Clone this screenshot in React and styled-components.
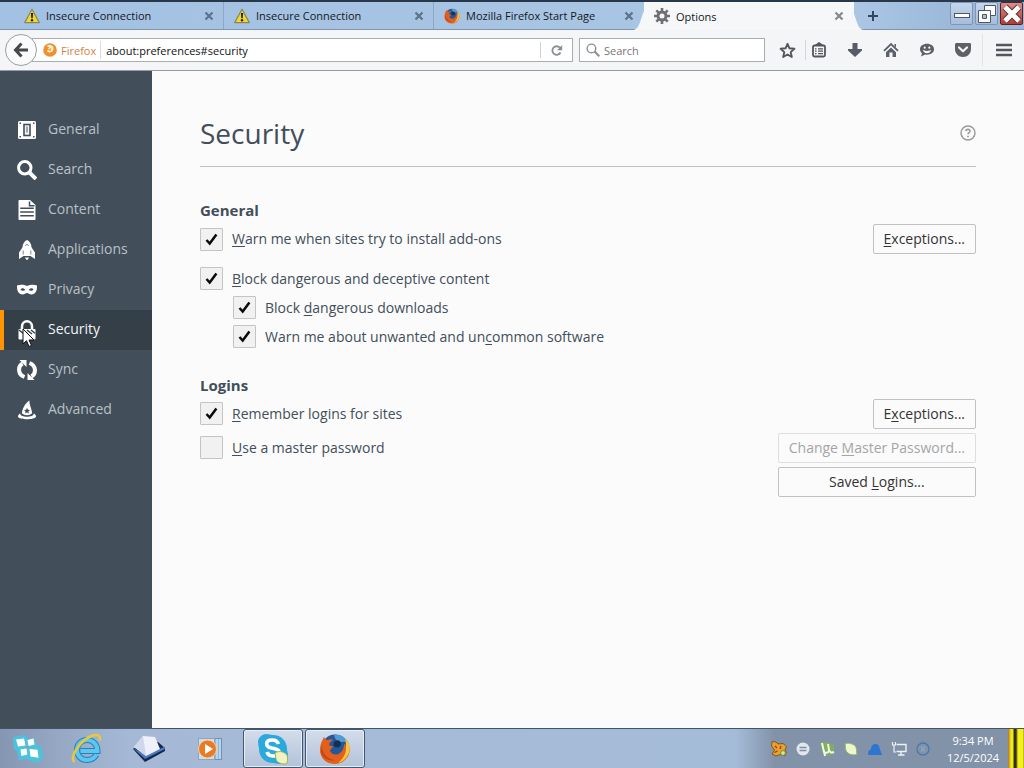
import React from 'react'
import styled, { createGlobalStyle } from 'styled-components'

const WarningIcon = () => (
    <svg width="16" height="16" viewBox="0 0 16 16" aria-hidden="true">
        <path d="M8 1.200 15.300 14.600H.7z" fill="#efd92e" stroke="#8b8558" strokeWidth="1.200" strokeLinejoin="round" />
        <path d="M6.900 5h2.200l-.4 5.200H7.300z" fill="#222" />
        <circle cx="8" cy="12.200" r="1.200" fill="#222" />
    </svg>
)

const FirefoxIcon = ({ size }) => (
    <svg width={size} height={size} viewBox="0 0 32 32" aria-hidden="true">
        <circle cx="16" cy="15" r="13.500" fill="#23589c" />
        <path d="M15 2c6-1.500 12 2 14 8-3-2-5-1-8-1s-5-3-6-7z" fill="#4f9bd6" />
        <path d="M16 8c3-2 6 0 6 3s-3 4-6 3c-2-1-2-4 0-6z" fill="#16304f" />
        <path d="M3 8c1-1 1-3 2-4 1 2 2 3 4 3 2-1 4-1 5 0-2 1-4 3-4 5 1 1 3 1 4 1 0 2-3 3-3 5 1 3 6 5 10 2 3-2 4-6 4-9 1 0 2 1 2 3 1-3 0-6-1-8 4 3 6 9 4 15-2 6-8 10-14 10C7 31 1 25 1 17c0-4 1-7 2-9z" fill="#e2601b" />
        <path d="M26 6c5 4 6 11 3 16-2 4-6 7-10 8 5-4 8-9 8-15 0-3 0-6-1-9z" fill="#f8c63b" />
        <path d="M3 12c0 8 4 14 13 15-6 2-12-2-14-8z" fill="#c83f1c" />
    </svg>
)

const GearIcon = () => (
    <svg width="16" height="16" viewBox="0 0 16 16" fill="none" stroke="#6d6f73" aria-hidden="true">
        <circle cx="8" cy="8" r="4" strokeWidth="3" />
        <path d="M8 0v3M8 13v3M0 8h3M13 8h3M2.300 2.300l2.100 2.100M11.600 11.600l2.100 2.100M2.300 13.700l2.100-2.100M11.600 4.400l2.100-2.100" strokeWidth="2.600" />
    </svg>
)

const CloseIcon = () => (
    <svg width="10" height="10" viewBox="0 0 10 10" aria-hidden="true">
        <path d="M1.500 1.500l7 7M8.500 1.500l-7 7" stroke="currentColor" strokeWidth="2.200" />
    </svg>
)

const PlusIcon = () => (
    <svg width="12" height="12" viewBox="0 0 12 12" aria-hidden="true">
        <path d="M6 1v10M1 6h10" stroke="#33475c" strokeWidth="2" />
    </svg>
)

const MinimizeIcon = () => (
    <svg width="18" height="18" viewBox="0 0 18 18" aria-hidden="true">
        <rect x="1.500" y="8.500" width="15" height="4" fill="#fff" stroke="#4e5768" />
    </svg>
)

const RestoreIcon = () => (
    <svg width="20" height="20" viewBox="0 0 20 20" fill="#fff" stroke="#4e5768" aria-hidden="true">
        <path d="M7.500 1.500h11v10h-11z" />
        <path d="M1.500 6.500h12v12h-12z" />
        <path d="M5.500 10.500h4v4h-4z" fill="#aebfd8" />
    </svg>
)

const WindowCloseIcon = () => (
    <svg width="20" height="20" viewBox="0 0 20 20" aria-hidden="true">
        <path d="M3 3l14 14M17 3L3 17" stroke="#5d3a3d" strokeWidth="7" />
        <path d="M3 3l14 14M17 3L3 17" stroke="#fff" strokeWidth="4.800" />
    </svg>
)

const BackIcon = () => (
    <svg width="16" height="16" viewBox="0 0 16 16" fill="none" stroke="#45484c" aria-hidden="true">
        <path d="M8.500 1.500L2.500 8l6 6.500M3 8h12" strokeWidth="3" />
    </svg>
)

const IdentityIcon = () => (
    <svg width="14" height="14" viewBox="0 0 14 14" aria-hidden="true">
        <circle cx="7" cy="7" r="6.800" fill="#f0902c" />
        <path d="M3.500 3c2-1.500 5-1.500 6.500.5 1.500 3-.5 6-3.500 6-1.500 0-2.500-.7-2.700-2l2.700-.7-1.800-1.300 1.800-1z" fill="#fff1d8" />
        <path d="M6.500 5c1.500 0 2.200.8 1.800 2s-1.500 1.200-2.300.8z" fill="#f3ab45" />
    </svg>
)

const ReloadIcon = () => (
    <svg width="13" height="13" viewBox="0 0 13 13" aria-hidden="true">
        <path d="M10.500 8.500a4.300 4.300 0 1 1-.6-4.800" fill="none" stroke="#8c8e91" strokeWidth="1.800" />
        <path d="M12.200 1v5.200H7z" fill="#8c8e91" />
    </svg>
)

const SearchIcon = ({ size, color, weight }) => (
    <svg width={size} height={size} viewBox="0 0 20 20" fill="none" stroke={color} strokeWidth={weight} aria-hidden="true">
        <circle cx="7.800" cy="7.800" r="6.200" />
        <path d="M12.300 12.300l6.700 6.700" strokeWidth={weight + 1} />
    </svg>
)

const StarIcon = () => (
    <svg width="17" height="17" viewBox="0 0 17 17" aria-hidden="true">
        <path d="M8.500 1.800l2 4.500 4.900.5-3.700 3.300 1.100 4.900-4.300-2.500L4.200 15l1.100-4.900L1.600 6.800l4.900-.5z" fill="none" stroke="#53565b" strokeWidth="1.900" strokeLinejoin="round" />
    </svg>
)

const BookmarksIcon = () => (
    <svg width="16" height="16" viewBox="0 0 16 16" fill="none" stroke="#53565b" aria-hidden="true">
        <rect x="2" y="3.500" width="12" height="11" rx="1.500" strokeWidth="1.800" />
        <path d="M5 3L8 1l3 2z" fill="#53565b" strokeWidth="1.500" />
        <path d="M4 6.800h1.500M7 6.800h5M4 9.200h1.500M7 9.200h5M4 11.700h1.500M7 11.700h5" strokeWidth="1.300" />
    </svg>
)

const DownloadIcon = () => (
    <svg width="16" height="16" viewBox="0 0 16 16" aria-hidden="true">
        <path d="M5.500 1h5v6H15v1.500L8 15 1 8.500V7h4.500z" fill="#575d66" />
    </svg>
)

const HomeIcon = () => (
    <svg width="16" height="16" viewBox="0 0 16 16" fill="#5a616a" aria-hidden="true">
        <path d="M1 8.800L8 2l7 6.800" fill="none" stroke="#5a616a" strokeWidth="1.800" />
        <path d="M8 5.400l5 4.800V15H9.600v-4.500H6.400V15H3v-4.800z" />
        <path d="M11.500 2H13v3.500l-1.500-1.400z" />
    </svg>
)

const ChatIcon = () => (
    <svg width="16" height="16" viewBox="0 0 16 16" aria-hidden="true">
        <path d="M8 1.800c4 0 7 2.300 7 5.500s-3 5.400-7 5.400c-.6 0-1.200 0-1.800-.2L2 14.500l1-3.200C1.800 10.300 1 9 1 7.300c0-3.200 3-5.500 7-5.500z" fill="#5c6065" />
        <circle cx="5.700" cy="5.700" r="1.100" fill="#f4f4f4" />
        <circle cx="10.300" cy="5.700" r="1.100" fill="#f4f4f4" />
        <path d="M3.700 7.800c1.500 1.500 7 1.500 8.600 0-.5 2.300-2 3.400-4.300 3.400s-3.800-1.100-4.300-3.400z" fill="#f4f4f4" />
    </svg>
)

const PocketIcon = () => (
    <svg width="18" height="16" viewBox="0 0 18 16" aria-hidden="true">
        <path d="M2.500 1h13c1 0 1.500.6 1.500 1.500V7c0 4.500-3.500 8-8 8S1 11.500 1 7V2.500C1 1.600 1.500 1 2.500 1z" fill="#5d6065" />
        <path d="M5 5.500l4 3.800 4-3.800" fill="none" stroke="#f5f5f5" strokeWidth="2.200" strokeLinecap="round" strokeLinejoin="round" />
    </svg>
)

const MenuIcon = () => (
    <svg width="16" height="14" viewBox="0 0 16 14" aria-hidden="true">
        <path d="M0 2h16M0 7h16M0 12h16" stroke="#53575d" strokeWidth="2.600" />
    </svg>
)

const GeneralIcon = () => (
    <svg width="20" height="20" viewBox="0 0 20 20" aria-hidden="true">
        <rect x="1" y="1" width="18" height="18" rx="1.500" fill="#fff" />
        <rect x="7" y="4.500" width="6" height="11" fill="#f4f5f6" stroke="#424f5a" strokeWidth="1.600" />
        <path d="M9.200 6.500h1.600v6H9.200z" fill="#8a939b" />
        <path d="M2.500 2.500H4V4H2.500zM16 2.500h1.500V4H16zM2.500 16H4v1.500H2.500zM16 16h1.500v1.500H16z" fill="#424f5a" />
    </svg>
)

const ContentIcon = () => (
    <svg width="20" height="20" viewBox="0 0 20 20" aria-hidden="true">
        <path d="M2.500 0H13l5.500 5V19c0 .6-.4 1-1 1h-15c-.6 0-1-.4-1-1V1c0-.6.400-1 1-1z" fill="#fff" />
        <path d="M12.500 1.500v4.300h5M3.200 8.300h13.600M3.200 12h13.600M3.200 15.700h13.600" fill="none" stroke="#424f5a" strokeWidth="1.500" />
    </svg>
)

const ApplicationsIcon = () => (
    <svg width="20" height="20" viewBox="0 0 20 20" fill="#fff" aria-hidden="true">
        <path d="M10 0c2.500 1 4.300 3.500 4.600 7.500L18 12.500V19l-4.500-3h-7L2 19v-6.500l3.400-5C5.700 3.500 7.500 1 10 0z" />
        <path d="M7.800 17.500h4.400L10 20.500z" />
        <path d="M8.300 5.800c.5-1.700 2.900-1.700 3.400 0M6.200 10.500v4M13.800 10.500v4" fill="none" stroke="#7c878f" />
    </svg>
)

const PrivacyIcon = () => (
    <svg width="20" height="20" viewBox="0 0 20 20" aria-hidden="true">
        <path d="M0 5.500c3-1.200 7-1 10 .5 3-1.500 7-1.700 10-.5.300 5-1.500 9-5.500 9-2 0-3-1.500-4.500-1.500s-2.500 1.500-4.500 1.500c-4 0-5.800-4-5.500-9z" fill="#fff" />
        <path d="M3.500 9.300c1.500-1.500 3.500-1.200 4.800.8-1.800 1.200-3.800 1-4.800-.8zM16.500 9.300c-1.500-1.500-3.500-1.200-4.800.8 1.800 1.200 3.800 1 4.800-.8z" fill="#424f5a" />
    </svg>
)

const SecurityIcon = () => (
    <svg width="20" height="20" viewBox="0 0 20 20" aria-hidden="true">
        <path d="M5 9.500V6.500c0-7 10-7 10 0v3" fill="none" stroke="#fff" strokeWidth="2.500" />
        <rect x="1.500" y="9" width="17" height="10.500" rx="1" fill="#fff" />
        <path d="M2 10l5 4M6 10l5 4M10 10l5 4M14 10l4 3.200" stroke="#343f48" strokeWidth="1.400" />
    </svg>
)

const SyncIcon = () => (
    <svg width="20" height="20" viewBox="0 0 20 20" fill="#fff" aria-hidden="true">
        <path d="M7.500 17C.800 14.500.500 6.500 5.500 3.500M12.500 3c6.700 2.500 7 10.500 2 13.500" fill="none" stroke="#fff" strokeWidth="4" />
        <path d="M2.500 0H9.500v7zM17.500 20h-7v-7z" />
    </svg>
)

const AdvancedIcon = () => (
    <svg width="20" height="20" viewBox="0 0 20 20" aria-hidden="true">
        <path d="M12.500.500c-.5 3.500 2 7.500 2.700 12.700-2.500 2.600-7.900 2.600-10.400 0C5.500 9 7.500 3.500 12.500.500z" fill="#fff" />
        <path d="M10 7.800l.9 2 2.100.2-1.600 1.400.5 2.100-1.900-1.100-1.900 1.100.5-2.100L7 10l2.100-.2z" fill="#424f5a" />
        <path d="M3.200 13.200C-3 18 5 19.200 10 19.200s13-1.200 6.800-6c.4 4.600-14 4.600-13.600 0z" fill="#fff" />
    </svg>
)

const HelpIcon = () => (
    <svg width="16" height="16" viewBox="0 0 17 17" fill="none" stroke="#999b9d" aria-hidden="true">
        <circle cx="8.500" cy="8.500" r="7.400" strokeWidth="1.600" />
        <path d="M6.200 6.500c.2-2.600 4.700-2.500 4.500.1-.1 1.500-2.200 1.600-2.200 3.200M8.500 11.300V13" strokeWidth="1.700" />
    </svg>
)

const CheckMark = () => (
    <svg width="13" height="13" viewBox="0 0 13 13" aria-hidden="true">
        <path d="M1.500 7l3.200 3.500L11.400 1.500" fill="none" stroke="#0a0a0a" strokeWidth="2.500" />
    </svg>
)

const StartIcon = () => (
    <svg width="32" height="28" viewBox="0 0 32 28" aria-hidden="true">
        <path d="M1 2l12-2 3 4 6-1 2 6 6 4 1 10-6 5-8-3-3-1-7 1-2-9-3-2z" fill="#4cc3dc" />
        <path d="M14 11l3 0 0 3-3 0z" fill="#8a9cb6" />
        <path d="M4 4.500l8-1 1.500 7-7.500 1zM15.500 5l6-1.500 1 6-6 1.500zM8.500 14.500l6-1 .8 6-6 1.500zM17.500 14l8 .8 1 8-8-1.300z" fill="#fff" />
    </svg>
)

const ExplorerIcon = () => (
    <svg width="32" height="32" viewBox="0 0 32 32" fill="none" aria-hidden="true">
        <path d="M25.500 21.500C23 26 19 27 16 27 10 27 6 22.500 6 17S10 7 16 7s10.500 4.500 10.500 11H9.500" stroke="#2482bd" strokeWidth="6" />
        <path d="M25.500 21.500C23 26 19 27 16 27 10 27 6 22.500 6 17S10 7 16 7s10.500 4.500 10.500 11H9.500" stroke="#5dc6ee" strokeWidth="4" />
        <path d="M3.500 29C-2 24 10 6 22 2.500c5-1.500 8 .5 6.500 5" stroke="#e9c83f" strokeWidth="2.600" />
    </svg>
)

const BoxIcon = () => (
    <svg width="34" height="28" viewBox="0 0 34 28" aria-hidden="true">
        <path d="M1 14l12 13 20-11v-3l-7-6-22 5z" fill="#15284e" />
        <path d="M1 13l12 11 20-10-1-2-18 8z" fill="#4b7cc0" />
        <path d="M11 1l12 1 5 12-14 7L2 12z" fill="#eef1fa" />
        <path d="M11 1l3 20L2 12z" fill="#cfd7ea" />
    </svg>
)

const MediaIcon = () => (
    <svg width="28" height="26" viewBox="0 0 28 26" aria-hidden="true">
        <rect x="8.500" y="2.500" width="16" height="21" fill="#8fb9d9" stroke="#6f93b4" />
        <path d="M20 3v20M23 3v20" stroke="#e4f0f8" />
        <rect x="1.500" y="2.500" width="16" height="21" fill="#cfdde9" stroke="#8ca6bd" />
        <circle cx="10.500" cy="13" r="9" fill="#e87b24" stroke="#f6d3a8" />
        <path d="M8 8l8 5-8 5z" fill="#fff" />
    </svg>
)

const SkypeIcon = () => (
    <svg width="32" height="32" viewBox="0 0 32 32" aria-hidden="true">
        <path d="M9 1c3 0 5 1 7 1 8 0 14 6 14 14 0 2 1 4 1 6 0 5-4 9-9 9-2 0-4-1-6-1C8 30 2 24 2 16c0-2-1-4-1-7 0-4 4-8 8-8z" fill="#2aa9dc" />
        <path d="M21.500 11c-1-3-4-4-6.500-4-7 0-7 6.500-.5 8 7.500 1.500 8.500 2.500 7 6-2 3-10 3-11.500-2" fill="none" stroke="#fff" strokeWidth="3.600" />
        <path d="M18 20c5-3 9-1 12 2 1 4 1 7-1 9-5 0-9-1-10-5z" fill="#f0f3bf" stroke="#9ab35a" />
    </svg>
)

const CatTrayIcon = () => (
    <svg width="18" height="18" viewBox="0 0 18 18" aria-hidden="true">
        <path d="M2 1.500l4 .5 2 2 5-.5 3.500 3-1.500 3.500 1.500 2.500-2 3.500-4-1.500L6 16l-4-2 2.500-4L1.500 6z" fill="#eca02a" stroke="#7a5a2a" />
        <path d="M5 6l2 2M11 6l-1 3M4.500 12.500l3-1.500" stroke="#9c3b20" strokeWidth="1.300" />
        <circle cx="13" cy="13" r="2.400" fill="#d5e59b" stroke="#6d9440" />
    </svg>
)

const MessageTrayIcon = () => (
    <svg width="14" height="14" viewBox="0 0 14 14" aria-hidden="true">
        <circle cx="7" cy="7" r="6.500" fill="#e2e7ee" />
        <path d="M3.500 5.500h7M3.500 8.500h7" stroke="#7e8ea3" strokeWidth="1.400" />
    </svg>
)

const TorrentTrayIcon = () => (
    <svg width="16" height="16" viewBox="0 0 16 16" aria-hidden="true">
        <path d="M1 2l7-1 7 3v8l-5 3-6-2z" fill="#84ab62" />
        <path d="M3 2l2 9c3 2 5 0 5-2L9 3M10 9c1 3 3 3 5 2M5 10l1 5" fill="none" stroke="#f1f8e7" strokeWidth="2" />
    </svg>
)

const LeafTrayIcon = () => (
    <svg width="14" height="14" viewBox="0 0 14 14" aria-hidden="true">
        <path d="M1 1.500c5-1 10 1 11 4 1 2 0 4 1 7-5 1-9 0-11-4-1-2 0-4-1-7z" fill="#eef6cf" stroke="#92b86c" />
    </svg>
)

const CloudTrayIcon = () => (
    <svg width="14" height="14" viewBox="0 0 14 14" aria-hidden="true">
        <path d="M3 7c0-6 8-7 8.500-1l1.500 4 1 3H0l.5-4z" fill="#2d75cf" />
    </svg>
)

const NetworkTrayIcon = () => (
    <svg width="16" height="16" viewBox="0 0 16 16" fill="none" stroke="#eef1f5" aria-hidden="true">
        <path d="M5.500 3.500h9.500v7H5.500M10 11v2.500M7 14h6.500" strokeWidth="1.400" />
        <path d="M1.500 1v3h3V1M3 4v7h2" strokeWidth="1.200" />
    </svg>
)

const BluetoothTrayIcon = () => (
    <svg width="14" height="14" viewBox="0 0 14 14" fill="none" stroke="#4e77a7" aria-hidden="true">
        <circle cx="7" cy="7" r="6" strokeWidth="1.300" />
        <path d="M5 4.500l4 5M9 4.500l-4 5" stroke="#8aa5c4" strokeWidth="1.400" />
    </svg>
)

const PointerIcon = () => (
    <svg width="13" height="20" viewBox="0 0 13 20" aria-hidden="true">
        <path d="M1 1v15l3.500-3.300L7 18.500l2.500-1.100L7 12h5z" fill="#fff" stroke="#111" />
    </svg>
)

const tabs = [
    { title: 'Insecure Connection', icon: <WarningIcon /> },
    { title: 'Insecure Connection', icon: <WarningIcon /> },
    { title: 'Mozilla Firefox Start Page', icon: <FirefoxIcon size={16} /> },
    { title: 'Options', icon: <GearIcon />, active: true },
]

const categories = [
    { name: 'General', icon: <GeneralIcon /> },
    { name: 'Search', icon: <SearchIcon size={20} color="#fff" weight={3} /> },
    { name: 'Content', icon: <ContentIcon /> },
    { name: 'Applications', icon: <ApplicationsIcon /> },
    { name: 'Privacy', icon: <PrivacyIcon /> },
    { name: 'Security', icon: <SecurityIcon />, active: true },
    { name: 'Sync', icon: <SyncIcon /> },
    { name: 'Advanced', icon: <AdvancedIcon /> },
]

const CheckRow = ({ id, checked, onToggle, indent, children }) => (
    <Row $indent={indent}>
        <CheckWrap>
            <CheckInput type="checkbox" id={id} checked={checked} onChange={onToggle} />
            {checked && <CheckMark />}
        </CheckWrap>
        <CheckLabel htmlFor={id}>{children}</CheckLabel>
    </Row>
)

const App = () => {
    const [prefs, setPrefs] = React.useState({
        addons: true,
        block: true,
        downloads: true,
        software: true,
        remember: true,
        master: false,
    })
    const [url, setUrl] = React.useState('about:preferences#security')

    const bind = id => ({
        id,
        checked: prefs[id],
        onToggle: () => setPrefs({ ...prefs, [id]: !prefs[id] }),
    })

    return (
        <>
            <GlobalStyle />
            <Screen>
                <TabBar>
                    <TabStrip>
                        {tabs.map((tab, i) => (
                            <Tab key={i} $active={tab.active}>
                                {tab.active && <TabCurve />}
                                <TabIcon>{tab.icon}</TabIcon>
                                <TabTitle>{tab.title}</TabTitle>
                                <TabClose aria-label="Close tab" $active={tab.active}><CloseIcon /></TabClose>
                            </Tab>
                        ))}
                        <NewTab aria-label="New tab"><PlusIcon /></NewTab>
                    </TabStrip>
                    <WindowButtons>
                        <WindowButton aria-label="Minimize"><MinimizeIcon /></WindowButton>
                        <WindowButton aria-label="Restore"><RestoreIcon /></WindowButton>
                        <WindowButton aria-label="Close" $danger><WindowCloseIcon /></WindowButton>
                    </WindowButtons>
                </TabBar>

                <NavBar>
                    <BackButton aria-label="Back"><BackIcon /></BackButton>
                    <UrlBar>
                        <Identity><IdentityIcon />Firefox</Identity>
                        <UrlInput aria-label="Address" value={url} onChange={e => setUrl(e.target.value)} />
                        <ReloadButton aria-label="Reload"><ReloadIcon /></ReloadButton>
                    </UrlBar>
                    <SearchBox>
                        <SearchIcon size={14} color="#8d8f92" weight={2} />
                        <SearchInput aria-label="Search" placeholder="Search" />
                    </SearchBox>
                    <ToolButtons>
                        <ToolButton aria-label="Bookmark this page"><StarIcon /></ToolButton>
                        <ToolButton $divided aria-label="Bookmarks"><BookmarksIcon /></ToolButton>
                        <ToolButton aria-label="Downloads"><DownloadIcon /></ToolButton>
                        <ToolButton aria-label="Home"><HomeIcon /></ToolButton>
                        <ToolButton aria-label="Chat"><ChatIcon /></ToolButton>
                        <ToolButton aria-label="Pocket"><PocketIcon /></ToolButton>
                    </ToolButtons>
                    <MenuButton aria-label="Menu"><MenuIcon /></MenuButton>
                </NavBar>

                <Page>
                    <Sidebar>
                        {categories.map(item => (
                            <Category key={item.name} href={'#' + item.name.toLowerCase()} $active={item.active}>
                                {item.icon}
                                <CategoryName>{item.name}</CategoryName>
                                {item.active && <Pointer><PointerIcon /></Pointer>}
                            </Category>
                        ))}
                    </Sidebar>
                    <Main>
                        <Header>
                            <Title>Security</Title>
                            <HelpButton aria-label="Help"><HelpIcon /></HelpButton>
                        </Header>

                        <Group>
                            <GroupTitle>General</GroupTitle>
                            <SplitRow>
                                <CheckRow {...bind('addons')}><u>W</u>arn me when sites try to install add-ons</CheckRow>
                                <Button><u>E</u>xceptions...</Button>
                            </SplitRow>
                            <Stack>
                                <CheckRow {...bind('block')}><u>B</u>lock dangerous and deceptive content</CheckRow>
                                <CheckRow indent {...bind('downloads')}>Block <u>d</u>angerous downloads</CheckRow>
                                <CheckRow indent {...bind('software')}>Warn me about unwanted and un<u>c</u>ommon software</CheckRow>
                            </Stack>
                        </Group>

                        <Group>
                            <GroupTitle>Logins</GroupTitle>
                            <LoginGrid>
                                <CheckRow {...bind('remember')}><u>R</u>emember logins for sites</CheckRow>
                                <Button $end>E<u>x</u>ceptions...</Button>
                                <CheckRow {...bind('master')}><u>U</u>se a master password</CheckRow>
                                <Button disabled={!prefs.master}>Change <u>M</u>aster Password...</Button>
                                <SavedButton>Saved <u>L</u>ogins...</SavedButton>
                            </LoginGrid>
                        </Group>
                    </Main>
                </Page>

                <Taskbar>
                    <StartButton aria-label="Start"><StartIcon /></StartButton>
                    <TaskButton aria-label="Internet Explorer"><ExplorerIcon /></TaskButton>
                    <TaskButton aria-label="VirtualBox"><BoxIcon /></TaskButton>
                    <TaskButton aria-label="Media Player"><MediaIcon /></TaskButton>
                    <TaskButton aria-label="Skype" $open><SkypeIcon /></TaskButton>
                    <TaskButton aria-label="Firefox" $open><FirefoxIcon size={32} /></TaskButton>
                    <Tray>
                        <TrayIcon><CatTrayIcon /></TrayIcon>
                        <TrayIcon><MessageTrayIcon /></TrayIcon>
                        <TrayIcon><TorrentTrayIcon /></TrayIcon>
                        <TrayIcon><LeafTrayIcon /></TrayIcon>
                        <TrayIcon><CloudTrayIcon /></TrayIcon>
                        <TrayIcon><NetworkTrayIcon /></TrayIcon>
                        <TrayIcon><BluetoothTrayIcon /></TrayIcon>
                    </Tray>
                    <Clock>
                        <span>9:34 PM</span>
                        <span>12/5/2024</span>
                    </Clock>
                    <ShowDesktop aria-label="Show desktop" />
                </Taskbar>
            </Screen>
        </>
    )
}

export default App

const GlobalStyle = createGlobalStyle`
* { box-sizing: border-box; }
body {
    margin: 0;
    font-family: "Open Sans", "Noto Sans", sans-serif;
    font-size: 14px;
    color: #424e5a;
}
button, input {
    font: inherit;
    color: inherit;
    margin: 0;
    padding: 0;
    border: 0;
    background: none;
    outline: none;
}
svg {
    display: block;
    flex: none;
}
u { text-underline-offset: 2px; }
`

const Screen = styled.div`
display: flex;
flex-direction: column;
min-height: 100vh;`

const TabBar = styled.div`
display: flex;
justify-content: space-between;
height: 30px;
padding-left: 14px;
border-top: 2px solid #28374a;
border-bottom: 1px solid #8095ad;
background: linear-gradient(90deg, #a3c1e2, #aac6e4 860px, #9db9da 950px);`

const TabStrip = styled.div`
display: flex;
flex: 1;
min-width: 0;`

const Tab = styled.div`
position: relative;
display: flex;
align-items: center;
flex: 0 1 210px;
min-width: 0;
height: ${props => props.$active ? '28px' : '27px'};
padding: 0 9px 0 10px;
font-size: 11px;
color: #14181d;
border-right: 1px solid ${props => props.$active ? 'transparent' : '#8fa6c0'};
background-color: ${props => props.$active ? '#f6f7f8' : 'transparent'};

&:nth-child(3) { border-right-color: transparent; }`

/* sloped shoulders on both sides of the selected tab */
const TabCurve = styled.span`
&::before, &::after {
    content: '';
    position: absolute;
    top: 0;
    width: 22px;
    height: 28px;
    background-color: #f6f7f8;
}
&::before {
    left: -11px;
    clip-path: path('M0 28C10 28 7 0 22 0V28Z');
}
&::after {
    right: -11px;
    clip-path: path('M22 28C12 28 15 0 0 0V28Z');
}`

const TabIcon = styled.span`
position: relative;
margin-right: 6px;`

const TabTitle = styled.span`
position: relative;
flex: 1;
overflow: hidden;
white-space: nowrap;`

const TabClose = styled.button`
position: relative;
color: ${props => props.$active ? '#85888b' : '#5d7288'};`

const NewTab = styled.button`
display: grid;
place-items: center;
width: 38px;`

const WindowButtons = styled.div`
display: flex;
gap: 2px;
padding-right: 1px;`

const WindowButton = styled.button`
display: grid;
place-items: center;
width: 23px;
height: 23px;
border: 1px solid ${props => props.$danger ? '#5b2029' : '#7f95b3'};
border-radius: 2px;
background: ${props => props.$danger ? 'linear-gradient(#d99089, #b9392f)' : 'linear-gradient(#c4d6ec, #a5bddb)'};`

const NavBar = styled.div`
display: flex;
align-items: center;
height: 41px;
padding-left: 5px;
background-color: #f4f5f6;
border-bottom: 1px solid #979b9f;`

const BackButton = styled.button`
position: relative;
display: grid;
place-items: center;
flex: none;
width: 32px;
height: 32px;
border: 1px solid #9a9da0;
border-radius: 50%;
background-color: #fbfbfb;`

const UrlBar = styled.div`
display: flex;
align-items: center;
flex: 1;
min-width: 0;
height: 24px;
margin-left: -5px;
padding-left: 10px;
border: 1px solid #aaadb0;
background-color: #fff;
font-size: 11px;`

const Identity = styled.span`
display: flex;
align-items: center;
gap: 4px;
height: 18px;
padding-right: 4px;
color: #d4813f;
border-right: 1px solid #dcdcdc;`

const UrlInput = styled.input`
flex: 1;
min-width: 0;
padding-left: 5px;
color: #111;`

const ReloadButton = styled.button`
display: grid;
place-items: center;
width: 32px;
height: 16px;
border-left: 1px solid #d0d2d4;`

const SearchBox = styled.div`
display: flex;
align-items: center;
flex: 0 1 186px;
min-width: 0;
gap: 4px;
height: 24px;
margin-left: 6px;
padding: 0 6px;
border: 1px solid #aaadb0;
background-color: #fff;
font-size: 11px;`

const SearchInput = styled.input`
flex: 1;
min-width: 0;

&::placeholder {
    color: #777;
    opacity: 1;
}`

const ToolButtons = styled.div`
display: flex;
margin-left: 4px;`

const ToolButton = styled.button`
display: grid;
place-items: center;
width: ${props => props.$divided ? '31px' : '36px'};
height: 20px;
padding-right: ${props => props.$divided ? '5px' : '0'};
border-left: 1px solid ${props => props.$divided ? '#d3d5d7' : 'transparent'};`

const MenuButton = styled.button`
display: grid;
place-items: center;
width: 42px;
height: 32px;
margin-left: 2px;
border-left: 1px solid #e2e3e4;`

const Page = styled.div`
display: flex;
flex: 1;`

const Sidebar = styled.nav`
flex: none;
width: 152px;
padding-top: 39px;
background-color: #424f5a;`

const Category = styled.a`
position: relative;
display: flex;
align-items: center;
gap: 11px;
height: 40px;
padding-left: 13px;
border-left: 4px solid ${props => props.$active ? '#ff9500' : 'transparent'};
background-color: ${props => props.$active ? '#343f48' : 'transparent'};
color: ${props => props.$active ? '#f2f4f5' : '#b9c0c6'};
text-decoration: none;`

const CategoryName = styled.span`
padding-bottom: 2px;
line-height: 20px;`

const Pointer = styled.span`
position: absolute;
left: 18px;
top: 18px;`

const Main = styled.main`
flex: 1;
min-width: 0;
padding: 39px 48px 48px;
background-color: #fbfbfb;`

const Header = styled.header`
display: flex;
align-items: center;
justify-content: space-between;
height: 57px;
padding-bottom: 10px;
margin-bottom: 33px;
border-bottom: 1px solid #c1c1c1;`

const Title = styled.h1`
margin: 0;
font-size: 28px;
font-weight: 400;
line-height: 40px;`

const HelpButton = styled.button`
display: block;`

const Group = styled.section`
margin-bottom: 24px;`

const GroupTitle = styled.h2`
margin: 0 0 4px;
font-size: 15px;
font-weight: 700;
line-height: 20px;`

const SplitRow = styled.div`
display: flex;
align-items: center;
justify-content: space-between;`

const Stack = styled.div`
margin-top: 10px;`

const LoginGrid = styled.div`
display: grid;
grid-template-columns: 1fr auto;
align-items: start;
gap: 4px;`

const Row = styled.div`
display: flex;
align-items: center;
gap: 9px;
height: 29px;
padding-left: ${props => props.$indent ? '33px' : '0'};`

const CheckWrap = styled.span`
display: grid;
place-items: center;

& > * { grid-area: 1 / 1; }
& > svg { pointer-events: none; }`

const CheckInput = styled.input`
appearance: none;
width: 23px;
height: 23px;
border: 1px solid #c4c4c4;
border-radius: 1px;
background-color: #f1f1f1;`

const CheckLabel = styled.label`
line-height: 20px;`

const Button = styled.button`
height: 30px;
padding: 0 10px;
justify-self: ${props => props.$end ? 'end' : 'stretch'};
border: 1px solid #c1c1c1;
border-radius: 2px;
background-color: #fbfbfb;
color: #333;
line-height: 20px;

&:disabled {
    color: #a3a5a7;
    border-color: #dedede;
}`

const SavedButton = styled(Button)`
grid-column: 2;`

const Taskbar = styled.footer`
display: flex;
align-items: center;
height: 40px;
border-top: 1px solid #3f5568;
background: linear-gradient(90deg, #8496b1 0, #96a8c3 60px, #a5b9d6 130px, #a5bcd9 735px, #8292a8 775px, #8292a8 100%);`

const StartButton = styled.button`
display: grid;
place-items: center;
width: 55px;
margin-right: 2px;`

const TaskButton = styled.button`
display: grid;
place-items: center;
width: 60px;
height: 39px;
margin-right: 2px;
border: 1px solid ${props => props.$open ? '#46566c' : 'transparent'};
border-radius: 3px;
background: ${props => props.$open ? 'linear-gradient(#d3dcea, #b3c3da)' : 'none'};
box-shadow: ${props => props.$open ? 'inset 0 0 0 1px #e6edf6' : 'none'};`

const Tray = styled.div`
display: flex;
margin-left: auto;`

const TrayIcon = styled.span`
display: grid;
place-items: center;
width: 24px;`

const Clock = styled.div`
display: flex;
flex-direction: column;
align-items: center;
width: 73px;
padding-left: 3px;
font-size: 11px;
line-height: 17px;
color: #fff;`

const ShowDesktop = styled.button`
width: 16px;
height: 39px;
background: linear-gradient(90deg, #b5702b 0, #f0ea1c 3px, #f0ea1c 5px, #33300f 6px, #33300f 8px, #f5ef1a 10px, #f5ef1a 15px, #8f8a30 16px);`
